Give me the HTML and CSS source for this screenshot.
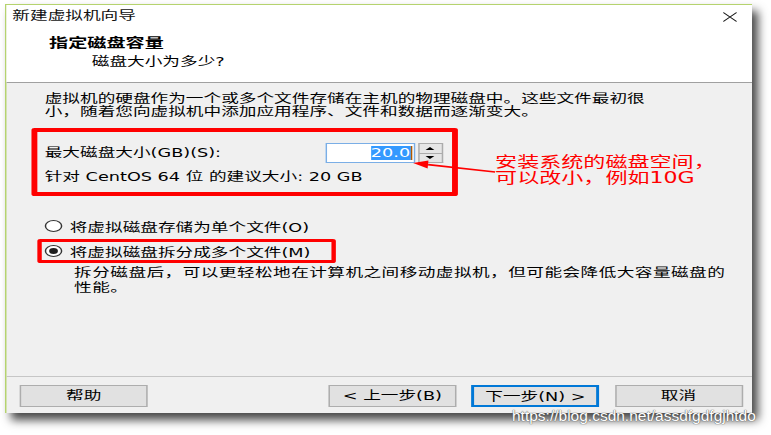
FILE: index.html
```html
<!DOCTYPE html>
<html lang="zh-CN">
<head>
<meta charset="utf-8">
<title>新建虚拟机向导</title>
<link rel="stylesheet" href="styles.css">
</head>
<body>
<div class="desk">
  <div class="frame">
    <div class="dialog">
      <header class="head">
        <div class="titlebar">
          <span class="title">新建虚拟机向导</span>
          <svg class="close" viewBox="0 0 10 10"><path d="M0.5 0.5L9.5 9.5M9.5 0.5L0.5 9.5"/></svg>
        </div>
        <div class="intro">
          <h1 class="step-title">指定磁盘容量</h1>
          <p class="step-sub">磁盘大小为多少?</p>
        </div>
      </header>
      <main class="body">
        <p class="lead">虚拟机的硬盘作为一个或多个文件存储在主机的物理磁盘中。这些文件最初很<br>小，随着您向虚拟机中添加应用程序、文件和数据而逐渐变大。</p>
        <div class="size-row">
          <label class="size-label">最大磁盘大小(GB)(S):</label>
          <div class="num-input"><span class="sel">20.0</span><span class="caret"></span></div>
          <div class="spin">
            <span class="spin-btn"><i class="tri up"></i></span>
            <span class="spin-btn"><i class="tri down"></i></span>
          </div>
        </div>
        <p class="hint">针对 CentOS 64 位 的建议大小: 20 GB</p>
        <div class="radio first"><span class="dot"></span>将虚拟磁盘存储为单个文件(O)</div>
        <div class="radio checked"><span class="dot"></span>将虚拟磁盘拆分成多个文件(M)</div>
        <p class="desc">拆分磁盘后，可以更轻松地在计算机之间移动虚拟机，但可能会降低大容量磁盘的<br>性能。</p>
      </main>
      <footer class="foot">
        <button class="btn">帮助</button>
        <div class="nav">
          <button class="btn">&lt; 上一步(B)</button>
          <button class="btn primary">下一步(N) &gt;</button>
          <button class="btn">取消</button>
        </div>
      </footer>
      <div class="mark mark-size"></div>
      <div class="mark mark-radio"></div>
      <svg class="arrow" viewBox="0 0 70 30">
        <path class="arrow-line" d="M62.3 17L16.7 9.6"/>
        <polygon class="arrow-head" points="6.55,8 16.96,5.6 16.4,13.6"/>
      </svg>
      <p class="note">安装系统的磁盘空间，<br>可以改小，例如10G</p>
    </div>
  </div>
  <div class="watermark">https://blog.csdn.net/assdfgdfgjhtdo</div>
</div>
</body>
</html>
```

FILE: styles.css
```css
* { box-sizing: border-box; }

html, body {
  margin: 0;
  padding: 0;
  background: #fff;
}

body {
  font-family: "DejaVu Sans", "Noto Sans CJK SC", sans-serif;
  font-size: 12px;
  color: #000;
}

.desk {
  position: relative;
  width: 771px;
  height: 435px;
  padding: 4px 0 0 5px;
  overflow: hidden;
}

.frame {
  width: 747px;
  height: 409px;
  box-shadow: 6px 7px 9px rgba(0, 0, 0, 0.72);
}

.dialog {
  position: relative;
  width: 508px;
  height: 409px;
  transform: scaleX(1.4705);
  transform-origin: 0 0;
  display: flex;
  flex-direction: column;
  background: #f0f0f0;
  border-top: 1px solid #b5d36e;
  border-left: 1px solid #b5d36e;
}

/* header */
.head {
  background: #fff;
  border-bottom: 1px solid #a0a0a0;
}

.titlebar {
  height: 23px;
  display: flex;
  align-items: center;
  justify-content: space-between;
  padding: 0 10px 0 4px;
}

.title {
  line-height: 23px;
  color: #111;
}

.close {
  width: 10px;
  height: 10px;
  fill: none;
  stroke: #1a1a1a;
  stroke-width: 1;
}

.intro {
  padding: 7px 0 12px 29px;
}

.step-title {
  margin: 0;
  font-size: 13px;
  line-height: 16px;
  font-weight: bold;
}

.step-sub {
  margin: 3px 0 0 29px;
  line-height: 16px;
}

/* body */
.body {
  flex: 1;
  padding: 10px 0 0 26px;
}

.lead {
  margin: 0;
  line-height: 13px;
}

.size-row {
  margin-top: 24px;
  display: grid;
  grid-template-columns: 188.5px 61px 17px;
  column-gap: 2px;
  height: 20px;
  align-items: stretch;
}

.size-label {
  line-height: 20px;
}

.num-input {
  background: #fff;
  border: 1px solid #7aaee6;
  display: flex;
  justify-content: flex-end;
  align-items: center;
  padding-right: 1px;
}

.sel {
  background: #3399ff;
  color: #fff;
  height: 14px;
  line-height: 14px;
}

.caret {
  width: 1px;
  height: 14px;
  background: #b05a00;
}

.spin {
  display: flex;
  flex-direction: column;
}

.spin-btn {
  flex: 1;
  background: #e6e6e6;
  border: 1px solid #acacac;
  display: flex;
  align-items: center;
  justify-content: center;
}

.spin-btn + .spin-btn {
  border-top: none;
}

.tri {
  width: 0;
  height: 0;
  border-left: 3px solid transparent;
  border-right: 3px solid transparent;
}

.tri.up { border-bottom: 3px solid #000; }
.tri.down { border-top: 3px solid #000; }

.hint {
  margin: 7px 0 0;
  line-height: 14px;
}

.radio {
  display: flex;
  align-items: center;
  height: 16px;
  margin-top: 9px;
}

.radio.first {
  margin-top: 34px;
}

.dot {
  position: relative;
  width: 12px;
  height: 12px;
  border: 1px solid #333;
  border-radius: 50%;
  background: #fff;
  margin-right: 5px;
}

.checked .dot::after {
  content: "";
  position: absolute;
  left: 2px;
  top: 2px;
  width: 6px;
  height: 6px;
  border-radius: 50%;
  background: #1f1f1f;
}

.desc {
  margin: 7px 0 0 20px;
  line-height: 15px;
  letter-spacing: 0.3px;
}

/* footer */
.foot {
  border-top: 1px solid #c6c6c6;
  padding: 8px 6.5px 6px 9px;
  display: flex;
  justify-content: space-between;
}

.nav {
  display: flex;
  gap: 10.3px;
}

.btn {
  width: 87px;
  height: 22px;
  padding: 0;
  background: #e1e1e1;
  border: 1px solid #adadad;
  font: inherit;
  color: #000;
  line-height: 20px;
}

.btn.primary {
  border: 2px solid #0078d7;
}

/* annotations drawn over the dialog */
.mark {
  position: absolute;
  border: 4px solid #f00;
  border-radius: 2px;
}

.mark-size {
  left: 17.4px;
  top: 123px;
  width: 290px;
  height: 68px;
}

.mark-radio {
  left: 21.4px;
  top: 234px;
  width: 203px;
  height: 24px;
  border-width: 3px;
}

.arrow {
  position: absolute;
  left: 270px;
  top: 150px;
  width: 70px;
  height: 30px;
  overflow: visible;
}

.arrow-line {
  stroke: #f00;
  stroke-width: 1.6;
  fill: none;
}

.arrow-head {
  fill: #f00;
}

.note {
  position: absolute;
  left: 332.3px;
  top: 148.5px;
  margin: 0;
  color: #f00;
  font-size: 15px;
  line-height: 16.5px;
  white-space: nowrap;
}

.watermark {
  position: absolute;
  left: 512px;
  top: 408px;
  font-family: "Liberation Sans", Arial, sans-serif;
  font-size: 15.5px;
  line-height: 16px;
  color: #fff;
  text-shadow: 0 0 1px #555, 0 0 1px #555;
  white-space: nowrap;
}
```
